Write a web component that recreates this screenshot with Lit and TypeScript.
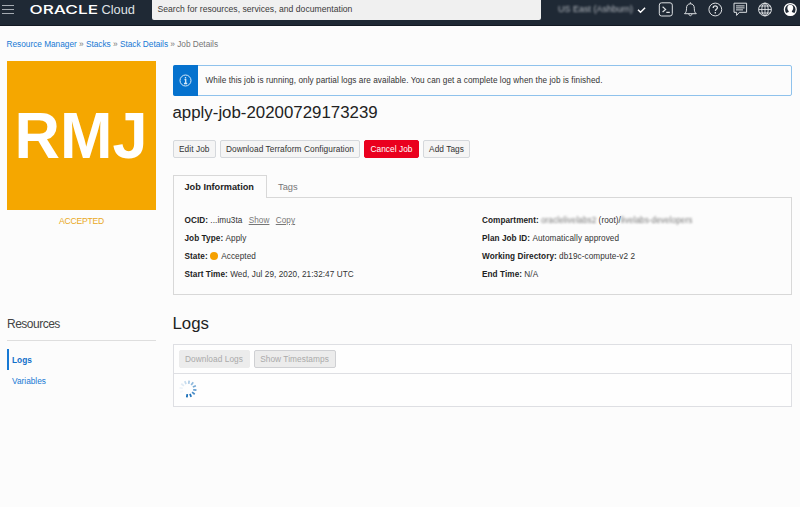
import { LitElement, html, css, svg } from "lit";
import { customElement, property } from "lit/decorators.js";

const RAYS = [1, 0.9, 0.75, 0.65, 0.55, 0.45, 0.35, 0.22, 0.12, 0.07, 0.03, 0];

@customElement("oc-header")
class OcHeader extends LitElement {
  static styles = css`
    :host { display: flex; height: 26px; box-sizing: border-box; background: #1f2935; border-bottom: 1px solid #121923; color: #fff; }
    svg { display: block; flex: none; }
    .menu { margin: 3px 0 0 2px; }
    .logo { margin-left: 14px; }
    .search { width: 389px; height: 19.5px; box-sizing: border-box; margin-left: 14px; padding-left: 5.5px; background: #f0f0f0; border-radius: 0 0 2px 2px; color: #3a3a3a; font-size: 8.6px; line-height: 19px; letter-spacing: .02px; white-space: nowrap; flex: none; }
    .region { margin-left: 17px; width: 78px; font-size: 9px; line-height: 19px; color: #b4b9bf; filter: blur(1.3px); white-space: nowrap; }
    .icons { display: block; margin-left: 1px; }
  `;
  render() {
    return html`
      <svg class="menu" width="12" height="12" viewBox="0 0 12 12" stroke="#a5abb2" stroke-width="1"><path d="M0 2.5H12M0 6.5H12M0 10.5H12" /></svg>
      <svg class="logo" width="110" height="20" viewBox="0 0 110 20" fill="#fff">
        <text x="1.5" y="13.9" font-family="Inter, sans-serif" font-weight="500" font-size="12" textLength="68.500" lengthAdjust="spacingAndGlyphs">ORACLE</text>
        <text x="73.500" y="14" font-family="Liberation Sans, sans-serif" font-size="13" fill="#dfe2e5" textLength="33.500" lengthAdjust="spacingAndGlyphs">Cloud</text>
      </svg>
      <div class="search">Search for resources, services, and documentation</div>
      <div class="region">US East (Ashburn)</div>
      <svg class="icons" width="163" height="20" viewBox="637 0 163 20" fill="none" stroke="#dde0e3" stroke-width="1">
        <path d="M638 9.7l2.5 2.6 4.600-4.600" stroke="#fff" stroke-width="1.4" />
        <rect x="659.3" y="2.800" width="13" height="13.200" rx="2.300" />
        <path d="M662.600 6.800l3 2.600-3 2.600M666.300 12.300h3.500" stroke-width="1.200" />
        <path d="M684.500 13.700c1.600-1.300 2-2.600 2-5.400 0-2.800 1.400-4.500 3.900-4.500s3.900 1.700 3.900 4.500c0 2.800 .4 4.100 2 5.400zM688.900 13.900c.1 2.400 2.900 2.400 3 0M690.400 2.300v1.500" />
        <circle cx="715.300" cy="9.500" r="6.400" />
        <path d="M713.200 8c0-2.800 4.300-2.600 4.200-.2 0 1.500-2 1.600-2 3.100M715.300 12v1.400" stroke-width="1.300" />
        <path d="M734 3.200h12.600v9.100h-7.200l-2.800 3.100v-3.100H734zM736 5.900h8.600M736 7.900h8.600M736 9.900h7" />
        <circle cx="765" cy="9.500" r="6.400" />
        <ellipse cx="765" cy="9.500" rx="3.200" ry="6.400" />
        <path d="M765 3v13M758.600 9.500h12.800M759.700 6h10.600M759.700 13h10.600" stroke-width=".9" />
        <circle cx="790.300" cy="9.500" r="5.900" stroke="#fff" stroke-width="1.300" />
        <path d="M787.400 7.800a2.900 3.100 0 0 1 5.800 0c0 1.800-.6 2.700-1.300 3.300v.8l3 1.300c-2.200 3-7 3-9.200 0l3-1.300v-.8c-.8-.6-1.300-1.500-1.300-3.300z" fill="#fff" stroke="none" />
      </svg>`;
  }
}

@customElement("oc-sidebar")
class OcSidebar extends LitElement {
  static styles = css`
    :host { display: block; width: 149px; flex: none; }
    .tile { height: 149px; background: #f5a700; }
    .tile svg { display: block; }
    .status { margin-top: 6px; text-align: center; color: #e9a91c; font-size: 8.600px; line-height: 10px; letter-spacing: -.2px; }
    .heading { margin-top: 89px; padding-bottom: 6px; height: 19px; border-bottom: 1px solid #dedede; color: #444; font-size: 12px; letter-spacing: -.5px; line-height: 19px; }
    .nav { margin-top: 8px; display: flex; flex-direction: column; color: #1779d4; font-size: 8.300px; }
    .item { height: 21px; line-height: 22px; padding-left: 5px; }
    .active { border-left: 2px solid #1779d4; padding-left: 3px; font-weight: bold; color: #0f6fc9; }
  `;
  render() {
    return html`
      <div class="tile">
        <svg width="149" height="149" viewBox="0 0 149 149"><text x="7.500" y="96.500" fill="#fff" font-family="Liberation Sans, sans-serif" font-weight="bold" font-size="65" textLength="133" lengthAdjust="spacingAndGlyphs">RMJ</text></svg>
      </div>
      <div class="status">ACCEPTED</div>
      <div class="heading">Resources</div>
      <div class="nav"><div class="item active">Logs</div><div class="item">Variables</div></div>`;
  }
}

@customElement("oc-field")
class OcField extends LitElement {
  @property() label = "";
  static styles = css`
    :host { display: flex; align-items: center; height: 18px; white-space: nowrap; color: #333; gap: 2.300px; font-size: 8.200px; letter-spacing: .07px; }
    b { color: #222; }
  `;
  render() {
    return html`<b>${this.label}:</b><slot></slot>`;
  }
}

@customElement("app-root")
class AppRoot extends LitElement {
  static styles = css`
    :host { display: block; height: 507px; overflow: hidden; background: #fcfcfc; color: #333; font-family: "Liberation Sans", Arial, sans-serif; font-size: 8.200px; }
    svg { display: block; flex: none; }
    .crumbs { height: 35px; line-height: 36px; padding-left: 6.500px; color: #777; font-size: 8.300px; letter-spacing: -.02px; white-space: nowrap; }
    .link { color: #1779d4; }
    .body { display: flex; gap: 16.500px; padding: 0 8px 0 7px; }
    .main { flex: 1; min-width: 0; }
    .notice { display: flex; align-items: center; margin-top: 4px; height: 31px; box-sizing: border-box; border: 1px solid #8fc2ec; border-radius: 2px; }
    .mark { align-self: stretch; width: 25px; margin: -1px 8px -1px -1px; background: #0572ce; display: flex; align-items: center; justify-content: center; border-radius: 2px 0 0 2px; }
    .msg { letter-spacing: .07px; white-space: nowrap; }
    .title { margin-top: 5px; height: 24px; line-height: 24px; font-size: 16.850px; color: #222; }
    .row { display: flex; gap: 4px; }
    .actions { margin-top: 15px; }
    .btn { box-sizing: border-box; height: 18px; line-height: 16px; border: 1px solid #d5d8dc; border-radius: 2px; background: #f5f5f5; text-align: center; color: #333; white-space: nowrap; font-size: 8.300px; letter-spacing: .06px; }
    .w1 { width: 43.500px; } .w2 { width: 140px; } .w3 { width: 55px; } .w4 { width: 47px; } .w5 { width: 71px; } .w6 { width: 82px; }
    .danger { background: #ea001e; border-color: #ea001e; color: #fff; }
    .off { background: #ececec; color: #aaa; border-color: #ececec; }
    .edge { border-color: #cfd0d3; }
    .tabs { display: flex; margin-top: 17px; height: 23px; }
    .tab { box-sizing: border-box; width: 94px; border: 1px solid #d8d8d8; border-bottom: none; line-height: 23px; padding-left: 11px; font-size: 9.200px; font-weight: bold; color: #222; background: #fcfcfc; white-space: nowrap; }
    .other { flex: 1; border-bottom: 1px solid #d8d8d8; line-height: 24px; padding-left: 11.500px; font-size: 9.300px; color: #777; box-sizing: border-box; }
    .panel { display: grid; grid-template-columns: 297.500px 1fr; height: 97px; box-sizing: border-box; border: 1px solid #d8d8d8; border-top: none; padding: 13px 11px; }
    .muted { color: #777; text-decoration: underline; text-underline-offset: 1px; margin-left: 4px; }
    .blur { filter: blur(1px); color: #777; }
    .dot { width: 8px; height: 8px; border-radius: 50%; background: #f5a000; margin-right: 1px; }
    .low { padding-top: 1px; }
    .box { border: 1px solid #dedfe3; background: #fefefe; height: 61px; }
    .bar { height: 23px; padding: 5px 5px 0; border-bottom: 1px solid #dedfe3; }
    .spin { margin: 6px 0 0 5.500px; }
    .logs { margin-top: 17px; height: 24px; line-height: 24px; margin-bottom: 8px; font-size: 16.850px; color: #222; }
  `;
  render() {
    return html`
      <oc-header></oc-header>
      <div class="crumbs"><span class="link">Resource Manager</span> » <span class="link">Stacks</span> » <span class="link">Stack Details</span> » Job Details</div>
      <div class="body">
        <oc-sidebar></oc-sidebar>
        <div class="main">
          <div class="notice">
            <div class="mark"><svg width="13" height="13" viewBox="0 0 13 13" fill="none" stroke="#d8eaf9"><circle cx="6.500" cy="6.500" r="5.500" /><path d="M5.500 5.700h1.200v3.800M5 9.500h3.200M6.500 3v1.400" stroke-width="1.300" /></svg></div>
            <span class="msg">While this job is running, only partial logs are available. You can get a complete log when the job is finished.</span>
          </div>
          <div class="title"><span>apply-job-20200729173239</span></div>
          <div class="row actions">
            <div class="btn w1">Edit Job</div><div class="btn w2">Download Terraform Configuration</div><div class="btn w3 danger">Cancel Job</div><div class="btn w4">Add Tags</div>
          </div>
          <div class="tabs"><div class="tab">Job Information</div><div class="other">Tags</div></div>
          <div class="panel">
            <div>
              <oc-field label="OCID"><span class="low">...imu3ta</span><span class="low muted">Show</span><span class="low muted">Copy</span></oc-field>
              <oc-field label="Job Type">Apply</oc-field>
              <oc-field label="State"><span class="dot"></span>Accepted</oc-field>
              <oc-field label="Start Time">Wed, Jul 29, 2020, 21:32:47 UTC</oc-field>
            </div>
            <div>
              <oc-field label="Compartment"><span class="blur">oraclelivelabs2</span><span>(root)/<span class="blur">livelabs-developers</span></span></oc-field>
              <oc-field label="Plan Job ID">Automatically approved</oc-field>
              <oc-field label="Working Directory">db19c-compute-v2 2</oc-field>
              <oc-field label="End Time">N/A</oc-field>
            </div>
          </div>
          <div class="logs">Logs</div>
          <div class="box">
            <div class="row bar"><div class="btn off w5">Download Logs</div><div class="btn off edge w6">Show Timestamps</div></div>
            <svg class="spin" width="18" height="18" viewBox="-9 -9 18 18" stroke="#0b66b5" stroke-width="1.700">
              ${RAYS.map((o, i) => svg`<path d="M0 5.200V8.500" transform="rotate(${8 - i * 30})" opacity=${o} />`)}
            </svg>
          </div>
        </div>
      </div>`;
  }
}
